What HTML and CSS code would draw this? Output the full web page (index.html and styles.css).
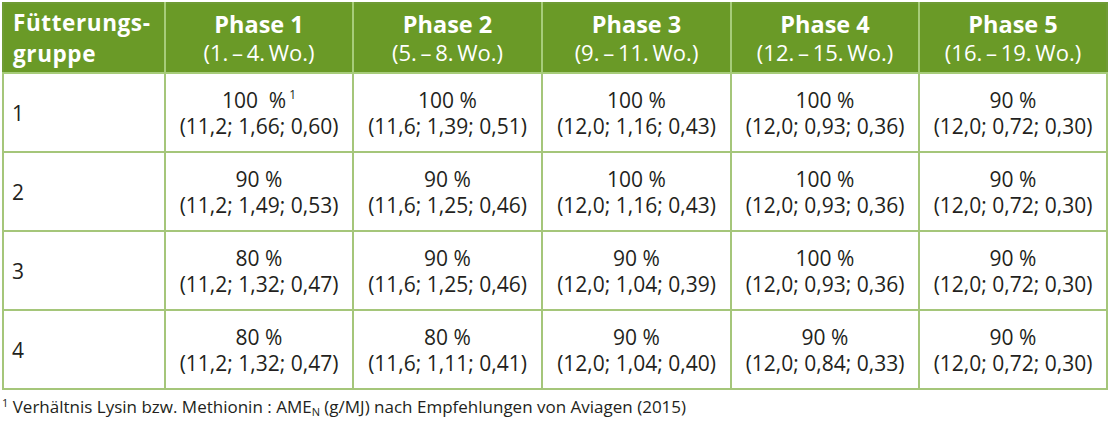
FILE: index.html
```html
<!DOCTYPE html>
<html lang="de">
<head>
<meta charset="utf-8">
<link rel="stylesheet" href="styles.css">
</head>
<body>
<div class="wrap">
<table class="feed">
  <colgroup>
    <col class="c0"><col class="c1"><col class="c2"><col class="c3"><col class="c4"><col class="c5">
  </colgroup>
  <thead>
    <tr>
      <th class="first"><b>Fütterungs-</b><b>gruppe</b></th>
      <th><b>Phase 1</b><span>(1. – 4. Wo.)</span></th>
      <th><b>Phase 2</b><span>(5. – 8. Wo.)</span></th>
      <th><b>Phase 3</b><span>(9. – 11. Wo.)</span></th>
      <th><b>Phase 4</b><span>(12. – 15. Wo.)</span></th>
      <th><b>Phase 5</b><span>(16. – 19. Wo.)</span></th>
    </tr>
  </thead>
  <tbody>
    <tr>
      <td class="first">1</td>
      <td>100 &nbsp;%<sup>1</sup><br>(11,2; 1,66; 0,60)</td>
      <td>100 %<br>(11,6; 1,39; 0,51)</td>
      <td>100 %<br>(12,0; 1,16; 0,43)</td>
      <td>100 %<br>(12,0; 0,93; 0,36)</td>
      <td>90 %<br>(12,0; 0,72; 0,30)</td>
    </tr>
    <tr>
      <td class="first">2</td>
      <td>90 %<br>(11,2; 1,49; 0,53)</td>
      <td>90 %<br>(11,6; 1,25; 0,46)</td>
      <td>100 %<br>(12,0; 1,16; 0,43)</td>
      <td>100 %<br>(12,0; 0,93; 0,36)</td>
      <td>90 %<br>(12,0; 0,72; 0,30)</td>
    </tr>
    <tr>
      <td class="first">3</td>
      <td>80 %<br>(11,2; 1,32; 0,47)</td>
      <td>90 %<br>(11,6; 1,25; 0,46)</td>
      <td>90 %<br>(12,0; 1,04; 0,39)</td>
      <td>100 %<br>(12,0; 0,93; 0,36)</td>
      <td>90 %<br>(12,0; 0,72; 0,30)</td>
    </tr>
    <tr>
      <td class="first">4</td>
      <td>80 %<br>(11,2; 1,32; 0,47)</td>
      <td>80 %<br>(11,6; 1,11; 0,41)</td>
      <td>90 %<br>(12,0; 1,04; 0,40)</td>
      <td>90 %<br>(12,0; 0,84; 0,33)</td>
      <td>90 %<br>(12,0; 0,72; 0,30)</td>
    </tr>
  </tbody>
</table>
<p class="note"><sup>1</sup> Verhältnis Lysin bzw. Methionin : AME<sub>N</sub> (g/MJ) nach Empfehlungen von Aviagen (2015)</p>
</div>
</body>
</html>
```
FILE: styles.css
```css
html, body {
  margin: 0;
  padding: 0;
  background: #ffffff;
}
body {
  font-family: "Open Sans", "Liberation Sans", sans-serif;
  color: #231f20;
}
.wrap {
  padding: 2px 4px 0 2px;
}
.feed {
  border-collapse: collapse;
  width: 1104px;
  table-layout: fixed;
  border: 2px solid #6f9b34;
}
.c0 { width: 162px; }
.c1 { width: 188px; }
.c2 { width: 189px; }
.c3 { width: 189px; }
.c4 { width: 188px; }
.c5 { width: 188px; }
.feed th {
  background: #6a9a27;
  color: #ffffff;
  height: 68px;
  padding: 0;
  font-weight: 400;
  font-size: 22px;
  line-height: 28px;
  text-align: center;
  vertical-align: middle;
  border-left: 2px solid #a7cc7a;
  border-bottom: 2px solid #a7cc7a;
}
.feed th b {
  display: block;
  font-weight: 700;
  font-size: 23.5px;
}
.feed th span {
  display: block;
  word-spacing: -2px;
}
.feed th.first {
  text-align: left;
  padding-left: 9px;
  border-left: none;
}
.feed th.first b {
  font-size: 22.5px;
  letter-spacing: 0.6px;
  line-height: 31px;
}
.feed td {
  height: 77px;
  padding: 0;
  font-size: 21px;
  line-height: 26px;
  text-align: center;
  vertical-align: middle;
  border: 2px solid #a5c67a;
}
.feed td.first {
  text-align: left;
  padding-left: 8px;
}
.feed sup {
  font-size: 12px;
  vertical-align: 9px;
  line-height: 0;
  margin-left: 3px;
  color: #231f20;
}
.note {
  margin: 6px 0 0 0;
  font-size: 17px;
  line-height: 22px;
}
.note sup {
  font-size: 11px;
  vertical-align: 6px;
  line-height: 0;
}
.note sub {
  font-size: 11px;
  vertical-align: -3px;
  line-height: 0;
}
```
